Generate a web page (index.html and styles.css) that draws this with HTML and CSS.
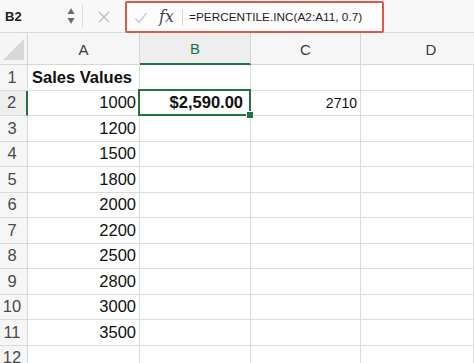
FILE: index.html
```html
<!DOCTYPE html>
<html>
<head>
<meta charset="utf-8">
<link rel="stylesheet" href="styles.css">
</head>
<body>
<div class="toolbar">
  <div class="namebox">
    <span class="ref">B2</span>
    <span class="spin">
      <svg width="8" height="18" viewBox="0 0 8 18"><path d="M4 1 L7.5 7 L0.5 7 Z" fill="#6b6b6b"/><path d="M4 17 L7.5 11 L0.5 11 Z" fill="#6b6b6b"/></svg>
    </span>
  </div>
  <div class="cancel">
    <svg width="14" height="14" viewBox="0 0 14 14"><path d="M2 2 L12 12 M12 2 L2 12" stroke="#c4c4c4" stroke-width="1.6" fill="none"/></svg>
  </div>
  <div class="formula">
    <span class="ok">
      <svg width="14" height="14" viewBox="0 0 14 14"><path d="M1.5 7.5 L5 11.5 L12.5 2" stroke="#cfcfcf" stroke-width="1.6" fill="none"/></svg>
    </span>
    <span class="fx">fx</span>
    <span class="sep"></span>
    <span class="ftext">=PERCENTILE.INC(A2:A11, 0.7)</span>
  </div>
</div>
<div class="grid">
  <div class="corner"><span class="tri"></span></div>
  <div class="colhead">A</div>
  <div class="colhead active">B</div>
  <div class="colhead">C</div>
  <div class="colhead last">D</div>

  <div class="rowhead">1</div>
  <div class="cell bold">Sales Values</div>
  <div class="cell"></div><div class="cell"></div><div class="cell"></div>

  <div class="rowhead active">2</div>
  <div class="cell num">1000</div>
  <div class="cell num bold selected">$2,590.00</div>
  <div class="cell num small">2710</div>
  <div class="cell"></div>

  <div class="rowhead">3</div><div class="cell num">1200</div><div class="cell"></div><div class="cell"></div><div class="cell"></div>
  <div class="rowhead">4</div><div class="cell num">1500</div><div class="cell"></div><div class="cell"></div><div class="cell"></div>
  <div class="rowhead">5</div><div class="cell num">1800</div><div class="cell"></div><div class="cell"></div><div class="cell"></div>
  <div class="rowhead">6</div><div class="cell num">2000</div><div class="cell"></div><div class="cell"></div><div class="cell"></div>
  <div class="rowhead">7</div><div class="cell num">2200</div><div class="cell"></div><div class="cell"></div><div class="cell"></div>
  <div class="rowhead">8</div><div class="cell num">2500</div><div class="cell"></div><div class="cell"></div><div class="cell"></div>
  <div class="rowhead">9</div><div class="cell num">2800</div><div class="cell"></div><div class="cell"></div><div class="cell"></div>
  <div class="rowhead">10</div><div class="cell num">3000</div><div class="cell"></div><div class="cell"></div><div class="cell"></div>
  <div class="rowhead">11</div><div class="cell num">3500</div><div class="cell"></div><div class="cell"></div><div class="cell"></div>
  <div class="rowhead">12</div><div class="cell"></div><div class="cell"></div><div class="cell"></div><div class="cell"></div>
</div>
</body>
</html>
```

FILE: styles.css
```css
* { box-sizing: border-box; }
html, body {
  margin: 0;
  padding: 0;
  width: 474px;
  height: 363px;
  overflow: hidden;
  background: #ffffff;
  font-family: "Liberation Sans", Arial, sans-serif;
}
.toolbar {
  display: flex;
  align-items: flex-end;
  height: 33px;
  padding-top: 2px;
  background: #f9f9f9;
  border-bottom: 1px solid #d9d9d9;
}
.namebox {
  width: 83px;
  display: flex;
  align-items: center;
  justify-content: space-between;
  padding: 0 7px 0 5px;
  border-right: 1px solid #dedede;
  align-self: center;
  height: 24px;
  margin-bottom: 3px;
}
.ref {
  font-size: 13px;
  color: #222;
  font-weight: 600;
  margin-top: 1px;
}
.spin { display: flex; margin-top: 1px; }
.cancel {
  width: 42px;
  height: 31px;
  display: flex;
  align-items: center;
  justify-content: center;
}
.formula {
  width: 259px;
  height: 32px;
  margin-bottom: -1px;
  border: 2px solid #df5a44;
  border-radius: 2px;
  display: flex;
  align-items: center;
  padding-left: 3px;
  background: #fdfdfd;
}
.ok { display: flex; width: 22px; justify-content: center; margin-top: 2px; }
.fx {
  font-family: "DejaVu Serif", "Liberation Serif", serif;
  font-style: italic;
  font-size: 16px;
  color: #444;
  margin-left: 7px;
  width: 18px;
  margin-top: -2px;
}
.sep {
  width: 1px;
  height: 17px;
  background: #d8d8d8;
  margin: 0 6px 0 5px;
}
.ftext {
  font-size: 11.8px;
  color: #1e1e1e;
  white-space: nowrap;
}
.grid {
  display: grid;
  grid-template-columns: 28px 112px 111px 110px 113px;
  grid-template-rows: 32px repeat(12, 25.5px);
}
.corner {
  background: #f5f5f5;
  border-right: 1px solid #d6d6d6;
  border-bottom: 1px solid #d6d6d6;
  display: flex;
  align-items: flex-end;
  justify-content: flex-end;
  padding: 0 3px 4px 0;
}
.tri {
  width: 0;
  height: 0;
  border-left: 21px solid transparent;
  border-bottom: 21px solid #d7d7d7;
}
.colhead {
  background: #f6f6f6;
  border-right: 1px solid #d6d6d6;
  border-bottom: 1px solid #d6d6d6;
  display: flex;
  align-items: center;
  justify-content: center;
  font-size: 15px;
  color: #3a3a3a;
  padding-top: 1px;
}
.colhead.last { padding-left: 27px; border-right: none; }
.colhead.active {
  color: #217346;
  background: #eeeeee;
  border-bottom: 2px solid #217346;
}
.rowhead {
  background: #f6f6f6;
  border-right: 1px solid #d6d6d6;
  border-bottom: 1px solid #d9d9d9;
  display: flex;
  align-items: center;
  justify-content: center;
  padding-right: 3px;
  font-size: 16.5px;
  color: #4a4a4a;
}
.rowhead.active {
  background: #eeeeee;
  border-right: 2px solid #217346;
}
.cell {
  border-right: 1px solid #dcdcdc;
  border-bottom: 1px solid #dcdcdc;
  display: flex;
  align-items: center;
  padding: 0 4px;
  font-size: 16.5px;
  color: #111;
  white-space: nowrap;
  position: relative;
}
.cell.num { justify-content: flex-end; padding-right: 3px; }
.cell.bold { font-weight: bold; }
.cell.small { font-size: 14px; padding-right: 3px; }
.cell.selected { padding-right: 7px; }
.cell.selected::after {
  content: "";
  position: absolute;
  left: -2px;
  top: -2px;
  right: -1px;
  bottom: -1px;
  border: 2px solid #217346;
}
.cell.selected::before {
  content: "";
  position: absolute;
  right: -4px;
  bottom: -4px;
  width: 6px;
  height: 6px;
  background: #217346;
  border: 1px solid #ffffff;
  z-index: 2;
}
```
